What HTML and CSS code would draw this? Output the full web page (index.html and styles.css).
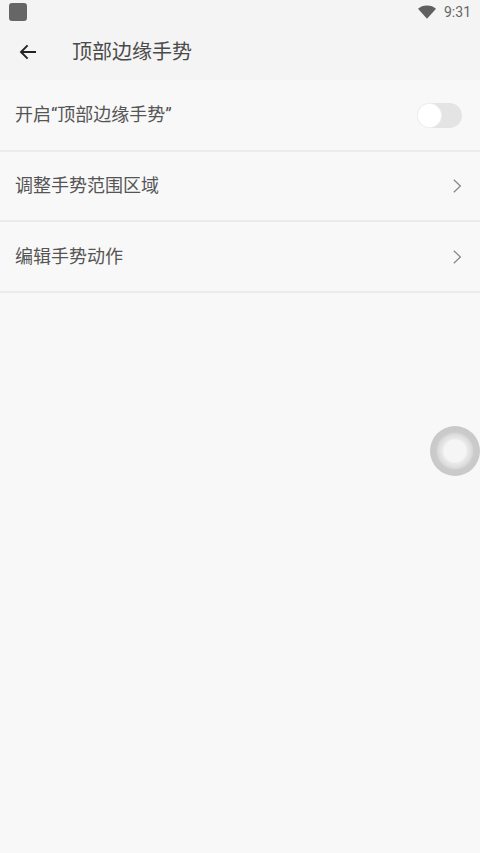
FILE: index.html
```html
<!DOCTYPE html>
<html lang="zh">
<head>
<meta charset="utf-8">
<title>顶部边缘手势</title>
<link rel="stylesheet" href="styles.css">
</head>
<body>
<div class="page">
  <header class="top">
    <div class="status">
      <span class="app-square"></span>
      <div class="status-right">
        <svg class="wifi" width="18" height="14" viewBox="0 0 18 14"><path d="M0 3.8C2.2 1.6 5.3 0.4 9 0.4S15.8 1.6 18 3.8L9 13.8Z" fill="#5f5f5f"/></svg>
        <span class="time">9:31</span>
      </div>
    </div>
    <div class="bar">
      <svg class="back" width="18" height="16" viewBox="0 0 18 16"><path d="M17 8H2.2M8.6 1.4L2 8l6.6 6.6" fill="none" stroke="#222" stroke-width="1.9"/></svg>
      <h1 class="title">顶部边缘手势</h1>
    </div>
  </header>
  <main class="list">
    <div class="row row-first">
      <span class="label">开启“顶部边缘手势”</span>
      <span class="switch"><span class="knob"></span></span>
    </div>
    <div class="row">
      <span class="label">调整手势范围区域</span>
      <svg class="chev" width="9" height="14" viewBox="0 0 9 14"><path d="M0.8 0.8L7.4 7L0.8 13.2" fill="none" stroke="#858585" stroke-width="1.2"/></svg>
    </div>
    <div class="row">
      <span class="label">编辑手势动作</span>
      <svg class="chev" width="9" height="14" viewBox="0 0 9 14"><path d="M0.8 0.8L7.4 7L0.8 13.2" fill="none" stroke="#858585" stroke-width="1.2"/></svg>
    </div>
  </main>
  <div class="float-ball"></div>
</div>
</body>
</html>
```
FILE: styles.css
```css
* { box-sizing: border-box; }
html, body { margin: 0; padding: 0; }
body {
  width: 480px;
  height: 853px;
  overflow: hidden;
  background: #f8f8f8;
  font-family: "Roboto", "Noto Sans CJK SC", sans-serif;
}
.page { position: relative; height: 853px; background: #f8f8f8; }
.top { background: #f4f4f4; height: 80px; display: flex; flex-direction: column; }
.status {
  height: 24px;
  padding: 3px 9px 0 9px;
  display: flex;
  justify-content: space-between;
  align-items: flex-start;
}
.app-square {
  width: 18px;
  height: 18px;
  border-radius: 3px;
  background: #666;
}
.status-right { display: flex; align-items: center; gap: 8px; height: 18px; }
.wifi { display: block; margin-top: -1px; }
.time { font-size: 14px; color: #666; line-height: 18px; }
.bar { height: 56px; display: flex; align-items: center; padding: 0 0 0 19px; }
.back { display: block; flex: none; }
.title {
  margin: 0 0 0 35px;
  font-size: 20px;
  line-height: 28px;
  font-weight: 400;
  color: #4a4a4a;
}
.list { display: flex; flex-direction: column; }
.row {
  height: 70.5px;
  padding: 1px 18px 0 15px;
  display: flex;
  align-items: center;
  justify-content: space-between;
  border-bottom: 2px solid #ebebeb;
}
.row-first { height: 71.5px; }
.label { font-size: 18px; line-height: 26px; color: #555; }
.chev { display: block; }
.switch {
  width: 45px;
  height: 25px;
  border-radius: 13px;
  background: #e4e4e4;
  padding: 1px;
  display: block;
}
.knob {
  display: block;
  width: 23px;
  height: 23px;
  border-radius: 50%;
  background: #fff;
  box-shadow: 0 0 0 1px #efefef;
}
.float-ball {
  position: absolute;
  left: 430px;
  top: 426px;
  width: 50px;
  height: 50px;
  border-radius: 50%;
  background: radial-gradient(circle closest-side, #f5f5f5 0 44%, #e9e9e9 50%, #e2e2e2 60%, #d8d8d8 70%, #cbcbcb 76%, #c9c9c9 98%, #cfcfcf 100%);
}
```
